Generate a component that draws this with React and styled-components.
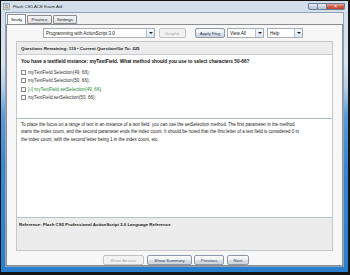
import React from 'react';
import styled, { createGlobalStyle } from 'styled-components';

const GlobalStyle = createGlobalStyle`
  html, body {
    margin: 0;
    padding: 0;
    background: #141414;
  }
  * {
    box-sizing: border-box;
  }
`;

const Screen = styled.div`
  width: 350px;
  height: 275px;
  padding: 1px 2px 3px 1px;
  font-family: 'Liberation Sans', Arial, sans-serif;
  color: #1b1b1b;
`;

const Window = styled.div`
  width: 100%;
  height: 100%;
  display: flex;
  flex-direction: column;
  background: linear-gradient(180deg, #d2deea 0%, #d9e4ef 22%, #b5cfe8 32%, #5b9ddb 42%, #3589d3 60%, #2a7fcd 100%);
`;

const TitleBar = styled.div`
  height: 12px;
  display: flex;
  align-items: center;
  padding: 0 3px 0 2px;
`;

const TitleText = styled.span`
  font-size: 4.3px;
  color: #1e1e1e;
  margin-left: 3px;
  flex: 1;
  white-space: nowrap;
`;

const CaptionButtons = styled.div`
  display: flex;
  align-self: flex-start;
  margin-top: 2px;
`;

const CaptionButton = styled.div`
  width: ${p => p.$w}px;
  height: 7px;
  border: 1px solid #6c7d92;
  border-left-width: ${p => (p.$first ? 1 : 0)}px;
  border-radius: ${p => (p.$first ? '0 0 0 2px' : p.$last ? '0 0 2px 0' : '0')};
  background: ${p => (p.$close
    ? 'linear-gradient(180deg, #e9a99b 0%, #d2614d 50%, #c0412c 100%)'
    : 'linear-gradient(180deg, #e8eef5 0%, #c9d6e4 50%, #b3c3d6 100%)')};
  display: flex;
  align-items: center;
  justify-content: center;
  color: #fff;
  font-size: 5px;
  line-height: 1;
`;

const Client = styled.div`
  flex: 1;
  margin: 0 4px 5px 4px;
  background: #f0f0f0;
  border: 1px solid #8ea2b8;
  display: flex;
  flex-direction: column;
  padding-top: 2px;
`;

const TabStrip = styled.div`
  display: flex;
  height: 9px;
  padding-left: 1px;
  gap: 1px;
  position: relative;
  z-index: 1;
`;

const Tab = styled.div`
  width: ${p => p.$w}px;
  height: ${p => (p.$active ? 10 : 9)}px;
  margin-top: ${p => (p.$active ? -1 : 0)}px;
  border: 1px solid #8c8e94;
  border-bottom: ${p => (p.$active ? 'none' : '1px solid #8c8e94')};
  border-radius: 1px 1px 0 0;
  background: ${p => (p.$active ? '#fcfcfc' : 'linear-gradient(180deg, #f3f3f3, #e0e0e0)')};
  font-size: 4.4px;
  display: flex;
  align-items: center;
  justify-content: center;
  color: #222;
`;

const TabPanel = styled.div`
  flex: 1;
  border: 1px solid #8c8e94;
  background: #f7f7f7;
  display: flex;
  flex-direction: column;
  padding: 3px 9px 0 9px;
`;

const Toolbar = styled.div`
  display: flex;
  height: 10px;
  padding-left: 27px;
`;

const Combo = styled.div`
  width: ${p => p.$w}px;
  margin-left: ${p => p.$ml || 0}px;
  height: 10px;
  border: 1px solid #a9acb4;
  background: #fff;
  display: flex;
  align-items: center;
  font-size: 4.5px;
  padding-left: 2px;
  color: #1a1a1a;
`;

const ComboLabel = styled.span`
  flex: 1;
  white-space: nowrap;
  overflow: hidden;
`;

const ComboArrow = styled.div`
  width: 8px;
  height: 100%;
  border-left: 1px solid #b9c3cf;
  background: linear-gradient(180deg, #f4f8fc, #dbe6f2);
  display: flex;
  align-items: center;
  justify-content: center;
  &::after {
    content: '';
    border-left: 2px solid transparent;
    border-right: 2px solid transparent;
    border-top: 2px solid #222;
  }
`;

const Button = styled.div`
  width: ${p => p.$w}px;
  margin-left: ${p => p.$ml || 0}px;
  height: 10px;
  border: 1px solid ${p => (p.$disabled ? '#c4c4c4' : '#8f99a6')};
  border-radius: 2px;
  background: ${p => (p.$disabled ? '#f2f2f2' : 'linear-gradient(180deg, #fbfbfb 0%, #eceef1 50%, #dcdfe4 51%, #d2d6dc 100%)')};
  color: ${p => (p.$disabled ? '#a8a8a8' : '#26406e')};
  font-size: 4.3px;
  display: flex;
  align-items: center;
  justify-content: center;
  white-space: nowrap;
`;

const QuestionPanel = styled.div`
  margin-top: 3px;
  height: 210px;
  border: 1px solid #c4c7cc;
  display: flex;
  flex-direction: column;
`;

const PanelHeader = styled.div`
  height: 13px;
  background: #ececec;
  border-bottom: 1px solid #c9cbce;
  display: flex;
  align-items: center;
  padding-left: 4px;
  font-size: 4.4px;
  font-weight: bold;
  white-space: nowrap;
`;

const QuestionArea = styled.div`
  height: 63px;
  background: #fff;
  padding: 3px 0 0 4px;
`;

const QuestionText = styled.div`
  font-size: 4.8px;
  font-weight: bold;
  line-height: 8px;
  white-space: nowrap;
  margin-bottom: 2px;
  color: #111;
`;

const Option = styled.div`
  display: flex;
  align-items: center;
  height: 8.5px;
  font-size: 4.6px;
  color: ${p => (p.$correct ? '#1b8a3a' : '#333')};
  white-space: nowrap;
`;

const Box = styled.span`
  width: 5px;
  height: 5px;
  border: 1px solid #8a8a8a;
  background: #fafafa;
  margin-right: 2px;
  flex: none;
`;

const Explanation = styled.div`
  flex: 1;
  background: #fff;
  border-top: 1px solid #a9b9c9;
  padding: 2px 4px 0 4px;
  font-size: 4.5px;
  line-height: 7.4px;
  white-space: nowrap;
`;

const ReferenceBox = styled.div`
  height: 33px;
  background: #ececec;
  border-top: 1px solid #b7c1ca;
  padding: 3px 0 0 2px;
  font-size: 4.4px;
  font-weight: bold;
  line-height: 7px;
  white-space: nowrap;
`;

const Footer = styled.div`
  display: flex;
  padding-left: 87px;
  margin-top: 4px;
`;

const TitleIcon = () => (
  <svg width="7" height="7" viewBox="0 0 7 7">
    <rect x="0.5" y="0.5" width="6" height="6" fill="#e9eef4" stroke="#6f7f90" strokeWidth="0.6" />
    <rect x="1.5" y="1.5" width="4" height="2" fill="#8fa9c4" />
    <rect x="1.5" y="4" width="4" height="1.5" fill="#c8a060" />
  </svg>
);

const options = [
  { text: 'myTextField.Selection(49, 66);' },
  { text: 'myTextField.Selection(50, 66);' },
  { text: '[√]  myTextField.setSelection(49, 66);', correct: true },
  { text: 'myTextField.setSelection(50, 66);' },
];

const App = () => {
  return (
    <Screen>
      <GlobalStyle />
      <Window>
        <TitleBar>
          <TitleIcon />
          <TitleText>Flash CS5 ACE Exam Aid</TitleText>
          <CaptionButtons>
            <CaptionButton $w={10} $first />
            <CaptionButton $w={9} />
            <CaptionButton $w={18} $close $last>×</CaptionButton>
          </CaptionButtons>
        </TitleBar>
        <Client>
          <TabStrip>
            <Tab $w={19} $active>Study</Tab>
            <Tab $w={25}>Practice</Tab>
            <Tab $w={24}>Settings</Tab>
          </TabStrip>
          <TabPanel>
            <Toolbar>
              <Combo $w={112}>
                <ComboLabel>Programming with ActionScript 3.0</ComboLabel>
                <ComboArrow />
              </Combo>
              <Button $w={27} $ml={4} $disabled>Graphic</Button>
              <Button $w={30} $ml={9}>Apply Flag</Button>
              <Combo $w={37} $ml={2}>
                <ComboLabel>View All</ComboLabel>
                <ComboArrow />
              </Combo>
              <Combo $w={36} $ml={3}>
                <ComboLabel>Help</ComboLabel>
                <ComboArrow />
              </Combo>
            </Toolbar>
            <QuestionPanel>
              <PanelHeader>Questions Remaining: 119 • Current Question/Go To: 225</PanelHeader>
              <QuestionArea>
                <QuestionText>
                  You have a textfield instance: myTextField. What method should you use to select characters 50-66?
                </QuestionText>
                {options.map(o => (
                  <Option key={o.text} $correct={o.correct}>
                    <Box />
                    {o.text}
                  </Option>
                ))}
              </QuestionArea>
              <Explanation>
                To place the focus on a range of text in an instance of a text field, you can use the setSelection method. The first parameter in the method
                <br />
                starts the index count, and the second parameter ends the index count. It should be noted that the first letter of a text field is considered 0 in
                <br />
                the index count, with the second letter being 1 in the index count, etc.
              </Explanation>
              <ReferenceBox>Reference: Flash CS5 Professional ActionScript 3.0 Language Reference</ReferenceBox>
            </QuestionPanel>
            <Footer>
              <Button $w={41} $disabled>Show Answer</Button>
              <Button $w={45} $ml={3}>Show Summary</Button>
              <Button $w={30} $ml={2}>Previous</Button>
              <Button $w={22} $ml={3}>Next</Button>
            </Footer>
          </TabPanel>
        </Client>
      </Window>
    </Screen>
  );
};

export default App;
